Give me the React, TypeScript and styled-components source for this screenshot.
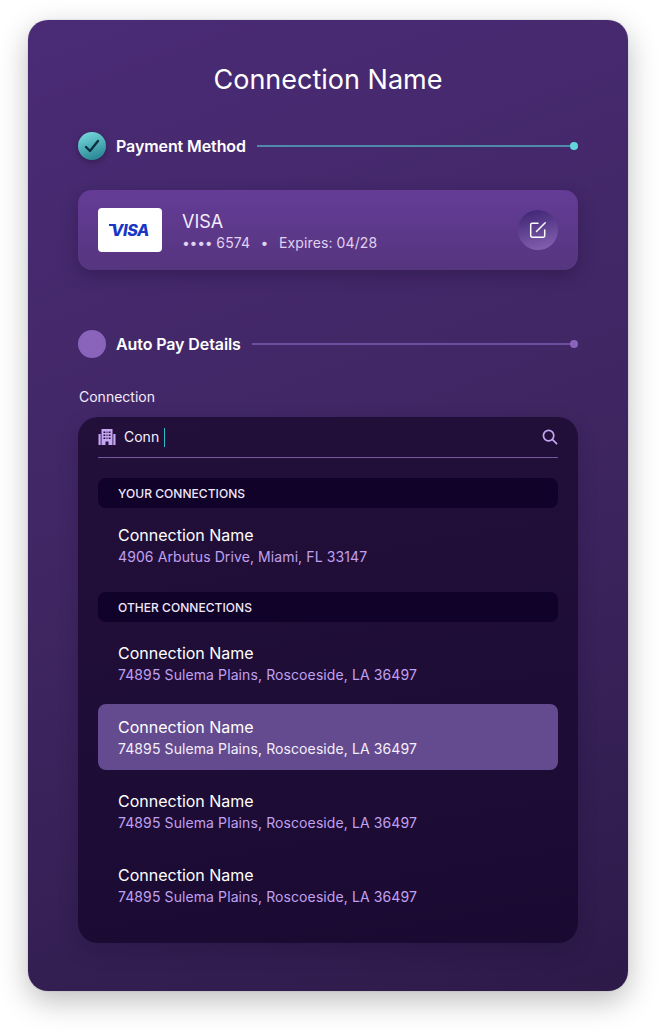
import React from "react";
import styled, { createGlobalStyle } from "styled-components";

const Global = createGlobalStyle`
  html, body { margin: 0; padding: 0; background: #fff; }
  body { font-family: Inter, "Liberation Sans", sans-serif; }
`;

const Page = styled.div`
  width: 660px;
  height: 1031px;
  box-sizing: border-box;
  padding: 20px 32px 40px 28px;
  overflow: hidden;
`;

const Card = styled.main`
  width: 600px;
  height: 971px;
  box-sizing: border-box;
  padding: 40px 50px 0;
  border-radius: 20px;
  background: linear-gradient(160deg, #4a2b76 0%, #3f2662 50%, #2d1a49 100%);
  box-shadow: 0 10px 30px rgba(0, 0, 0, 0.26), 0 0 1px rgba(60, 40, 100, 0.6);
  color: #fff;
`;

const Title = styled.h1`
  margin: 0 0 32px;
  font-size: 27px;
  line-height: 40px;
  font-weight: 400;
  text-align: center;
  color: #fff;
`;

const Step = styled.div<{ $mt?: number }>`
  display: flex;
  align-items: center;
  height: 28px;
  margin-top: ${(p) => p.$mt ?? 0}px;
`;

const Badge = styled.div`
  width: 28px;
  height: 28px;
  border-radius: 50%;
  flex: none;
  display: flex;
  align-items: center;
  justify-content: center;
  background: linear-gradient(160deg, #7ce0e2 0%, #1f7a8a 100%);
  box-shadow: 0 2px 6px rgba(0, 0, 0, 0.3);
`;

const EmptyBadge = styled.div`
  width: 28px;
  height: 28px;
  border-radius: 50%;
  flex: none;
  background: #8a63ba;
`;

const StepLabel = styled.span`
  margin-left: 10px;
  font-size: 16px;
  line-height: 20px;
  font-weight: 600;
  letter-spacing: -0.1px;
  white-space: nowrap;
`;

const StepLine = styled.div<{ $line: string }>`
  flex: 1;
  height: 2px;
  margin-left: 11px;
  background: ${(p) => p.$line};
`;

const StepDot = styled.div<{ $size: number; $dot: string }>`
  width: ${(p) => p.$size}px;
  height: ${(p) => p.$size}px;
  border-radius: 50%;
  flex: none;
  background: ${(p) => p.$dot};
`;

const Payment = styled.section`
  height: 80px;
  margin-top: 30px;
  box-sizing: border-box;
  padding: 0 20px;
  display: flex;
  align-items: center;
  border-radius: 14px;
  background: linear-gradient(180deg, #643c96 0%, #56357f 100%);
  box-shadow: 0 6px 16px rgba(30, 15, 55, 0.35);
`;

const VisaBox = styled.div`
  width: 64px;
  height: 44px;
  flex: none;
  border-radius: 4px;
  background: #fff;
  display: flex;
  align-items: center;
  justify-content: center;
`;

const VisaText = styled.span`
  position: relative;
  font-family: Inter, "Liberation Sans", sans-serif;
  font-style: italic;
  font-weight: 800;
  font-size: 16px;
  line-height: 18px;
  letter-spacing: -0.4px;
  color: #1737c4;

  &::before {
    content: "";
    position: absolute;
    left: -2px;
    top: 3px;
    width: 5px;
    height: 2px;
    background: #1737c4;
  }
`;

const PayInfo = styled.div`
  margin-left: 20px;
  flex: 1;
  padding-top: 3px;
`;

const PayName = styled.div`
  font-size: 18px;
  line-height: 22px;
  color: #f3ecfb;
`;

const PayMeta = styled.div`
  display: flex;
  align-items: center;
  margin-top: 1px;
  font-size: 14px;
  line-height: 18px;
  letter-spacing: 0.1px;
  color: #e0d2f2;
`;

const MetaDots = styled.span`
  letter-spacing: -0.3px;
`;

const MetaSep = styled.span`
  margin: 0 10.500px;
`;

const EditButton = styled.button`
  width: 40px;
  height: 40px;
  padding: 0;
  border: 0;
  border-radius: 50%;
  flex: none;
  display: flex;
  align-items: center;
  justify-content: center;
  background: linear-gradient(165deg, #3a2270 0%, #8a66b6 100%);
`;

const FieldLabel = styled.div`
  margin-top: 30px;
  margin-left: 1px;
  font-size: 14px;
  line-height: 18px;
  color: #f3ecfb;
`;

const Dropdown = styled.section`
  margin-top: 11px;
  height: 526px;
  box-sizing: border-box;
  padding: 0 20px;
  border-radius: 20px;
  background: linear-gradient(170deg, #23103a 0%, #1a0a32 100%);
  box-shadow: 0 8px 20px rgba(25, 10, 45, 0.22);
`;

const SearchRow = styled.div`
  height: 40px;
  display: flex;
  align-items: center;
  border-bottom: 1px solid #77599f;
`;

const SearchText = styled.span`
  margin-left: 8px;
  font-size: 14px;
  line-height: 20px;
  color: #f6f1fc;
`;

const Caret = styled.span`
  width: 1px;
  height: 19px;
  margin-left: 5px;
  background: #2bc0c8;
`;

const SearchIcon = styled.span`
  margin-left: auto;
  display: flex;
  color: #c4a6f2;
`;

const GroupHeader = styled.div<{ $mt: number; $mb: number }>`
  height: 30px;
  margin-top: ${(p) => p.$mt}px;
  margin-bottom: ${(p) => p.$mb}px;
  padding-left: 20px;
  display: flex;
  align-items: center;
  border-radius: 8px;
  background: #11022a;
  font-size: 12px;
  font-weight: 500;
  letter-spacing: 0.05px;
  color: #f0e8fa;
`;

const Row = styled.div<{ $active?: boolean }>`
  height: 66px;
  margin-bottom: 8px;
  box-sizing: border-box;
  padding: 12px 20px 0;
  border-radius: 8px;
  background: ${(p) => (p.$active ? "#644b8f" : "transparent")};
`;

const RowName = styled.div`
  font-size: 16px;
  line-height: 22px;
  color: #fff;
`;

const RowAddr = styled.div<{ $active?: boolean }>`
  font-size: 14px;
  line-height: 22px;
  letter-spacing: 0.1px;
  color: ${(p) => (p.$active ? "#f5effc" : "#c0a0f0")};
`;

const BuildingIcon = () => (
  <svg width="18" height="18" viewBox="0 0 18 18" fill="#c4a6f2" aria-hidden="true">
    <path fillRule="evenodd" d="M3.500 1h11v16h-4v-3.500h-3V17h-4V1Zm2 2.500V5h1.800V3.500H5.500Zm3 0V5h1V3.500h-1Zm2.200 0V5h1.800V3.500h-1.800ZM5.500 6.500V8h1.800V6.500H5.500Zm3 0V8h1V6.500h-1Zm2.200 0V8h1.800V6.500h-1.800ZM5.500 9.500V11h1.800V9.500H5.500Zm3 0V11h1V9.500h-1Zm2.200 0V11h1.800V9.500h-1.800Z" />
    <path d="M0.500 6H2.700V17H0.500zM15.300 6h2.200V17h-2.200z" />
  </svg>
);

const rows = [0, 1, 2, 3];

export default function App() {
  return (
    <Page>
      <Global />
      <Card>
        <Title>Connection Name</Title>

        <Step>
          <Badge>
            <svg width="16" height="14" viewBox="0 0 16 14" fill="none" stroke="#0c3040" strokeWidth="2.400" strokeLinecap="round" strokeLinejoin="round" aria-hidden="true">
              <path d="M2 8 6 12 14 2" />
            </svg>
          </Badge>
          <StepLabel>Payment Method</StepLabel>
          <StepLine $line="#4f8aa8" />
          <StepDot $size={8} $dot="#63d6dc" />
        </Step>

        <Payment>
          <VisaBox>
            <VisaText>VISA</VisaText>
          </VisaBox>
          <PayInfo>
            <PayName>VISA</PayName>
            <PayMeta>
              <MetaDots>••••</MetaDots>&nbsp;6574
              <MetaSep>•</MetaSep>
              Expires: 04/28
            </PayMeta>
          </PayInfo>
          <EditButton aria-label="Edit">
            <svg width="18" height="18" viewBox="0 0 18 18" fill="none" stroke="#fff" strokeWidth="1.500" strokeLinecap="round" strokeLinejoin="round" aria-hidden="true">
              <path d="M9 2.200H3.200a1.500 1.500 0 0 0-1.500 1.500v11a1.500 1.500 0 0 0 1.500 1.500h11a1.500 1.500 0 0 0 1.500-1.500V9" />
              <path d="M7.500 10.500 16.200 1.800" />
            </svg>
          </EditButton>
        </Payment>

        <Step $mt={60}>
          <EmptyBadge />
          <StepLabel>Auto Pay Details</StepLabel>
          <StepLine $line="#6f4ea0" />
          <StepDot $size={8} $dot="#8a63ba" />
        </Step>

        <FieldLabel>Connection</FieldLabel>

        <Dropdown>
          <SearchRow>
            <BuildingIcon />
            <SearchText>Conn</SearchText>
            <Caret />
            <SearchIcon>
              <svg width="16" height="17" viewBox="0 0 17 18" fill="none" stroke="currentColor" strokeWidth="1.800" strokeLinecap="round" aria-hidden="true">
                <circle cx="7" cy="7" r="5.500" />
                <path d="m11.200 11.200 4.300 4.300" />
              </svg>
            </SearchIcon>
          </SearchRow>

          <GroupHeader $mt={20} $mb={4}>YOUR CONNECTIONS</GroupHeader>
          <Row>
            <RowName>Connection Name</RowName>
            <RowAddr>4906 Arbutus Drive, Miami, FL 33147</RowAddr>
          </Row>

          <GroupHeader $mt={14} $mb={8}>OTHER CONNECTIONS</GroupHeader>
          {rows.map((i) => (
            <Row key={i} $active={i === 1}>
              <RowName>Connection Name</RowName>
              <RowAddr $active={i === 1}>74895 Sulema Plains, Roscoeside, LA 36497</RowAddr>
            </Row>
          ))}
        </Dropdown>
      </Card>
    </Page>
  );
}
